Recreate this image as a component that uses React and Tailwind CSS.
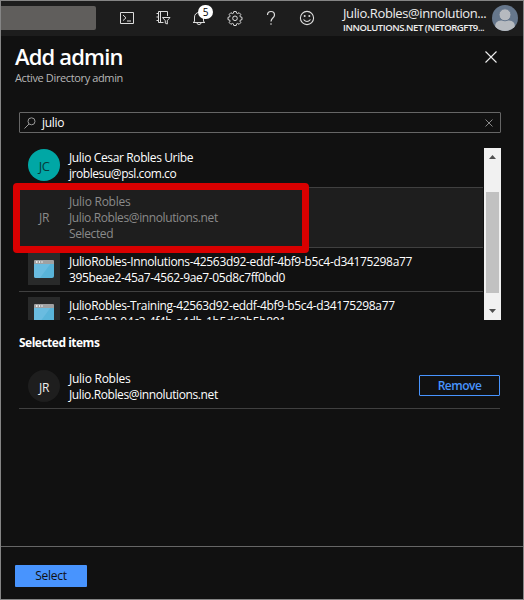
import React from "react";

const line = "whitespace-nowrap leading-4";

function Person({ className = "" }) {
  return (
    <svg viewBox="0 0 26 26" className={className}>
      <defs>
        <clipPath id="avatar"><circle cx="13" cy="13" r="13" /></clipPath>
      </defs>
      <g clipPath="url(#avatar)">
        <rect width="26" height="26" fill="#66778c" />
        <path d="M3 26v-4q0-6.500 6-6.500h8q6 0 6 6.500v4z" fill="#b6babf" />
        <circle cx="13" cy="9.800" r="6" fill="#b6babf" stroke="#66778c" />
      </g>
    </svg>
  );
}

function AppIcon() {
  return (
    <div className="h-8 w-8 shrink-0 bg-[#292a2a]">
      <svg viewBox="0 0 32 32" className="block h-8 w-8">
        <path d="M6 10h20v13q0 2-2 2H8q-2 0-2-2z" fill="#59b4d9" />
        <path d="M6 10h17L12 25H8q-2 0-2-2z" fill="#6abce0" />
        <path d="M6 11V8q0-1 1-1h18q1 0 1 1v3z" fill="#a0a1a2" />
        <path d="M8 9h1.500M11 9h1M13.500 9h1" stroke="#fff" strokeWidth="1.300" />
      </svg>
    </div>
  );
}

function Topbar() {
  return (
    <header className="flex h-[35px] shrink-0 items-start bg-[#1d1d1d] text-[#eee]">
      <div className="mt-[5px] h-6 w-[95px] rounded-r-[2px] bg-[#605e5c]" />
      <svg viewBox="0 0 16 16" className="mt-[9px] ml-[23px] h-4 w-4" fill="none" stroke="#ddd">
        <path d="M1.500 2.500h13v11h-13zM4 5l3 2.800-3 2.800M8 11h4" />
      </svg>
      <svg viewBox="0 0 16 16" className="mt-[9px] ml-5 h-4 w-4" fill="none" stroke="#ddd">
        <path d="M12.500 6V1.500h-9v11h5M5.500 1.500v11M1.500 3.500h2M1.500 7h2M1.500 10.500h2" />
        <path d="M7.500 7.500h7.500l-2.700 3.200v3.300l-2-.8v-2.500z" />
      </svg>
      <div className="relative mt-[9px] ml-5 h-4 w-4">
        <svg viewBox="0 0 16 16" className="h-4 w-4" fill="none" stroke="#ddd">
          <path d="M3.500 11.500V7a4.500 4.500 0 0 1 9 0v4.500l1.500 1H2zM6 13q0 1.500 2 1.500T10 13" />
        </svg>
        <span className="absolute -top-[5px] left-[7px] flex h-[14px] w-[15px] items-center justify-center rounded-full bg-white text-[10px] leading-none text-black">5</span>
      </div>
      <svg viewBox="0 0 16 16" className="mt-[9px] ml-5 h-4 w-4" fill="none" stroke="#ddd" strokeLinejoin="round">
        <path d="M6.800 1.500h2.400l.4 1.700 1 .4 1.500-.9 1.700 1.700-.9 1.500.4 1 1.700.4v2.400l-1.700.4-.4 1 .9 1.500-1.700 1.700-1.500-.9-1 .4-.4 1.700H6.800l-.4-1.700-1-.4-1.500.9-1.700-1.700.9-1.500-.4-1L1 9.700V7.300l1.700-.4.4-1-.9-1.500 1.700-1.700 1.500.9 1-.4z" />
        <circle cx="8" cy="8.300" r="2.300" />
      </svg>
      <svg viewBox="0 0 16 16" className="mt-[9px] ml-5 h-4 w-4" fill="none" stroke="#ddd" strokeWidth="1.200">
        <path d="M4.500 5Q4.500 1.500 8 1.500T11.500 5q0 1.500-1.700 3T8 11.500M8 13.200v1.500" />
      </svg>
      <svg viewBox="0 0 16 16" className="mt-[9px] ml-5 h-4 w-4" fill="none" stroke="#ddd" strokeWidth="1.100">
        <circle cx="8" cy="8" r="6.600" />
        <path d="M4.500 9.500q3.500 4 7 0" />
        <circle cx="5.700" cy="6" r="1" fill="#ddd" stroke="none" />
        <circle cx="10.300" cy="6" r="1" fill="#ddd" stroke="none" />
      </svg>
      <div className="ml-[28px] w-[146px] whitespace-nowrap">
        <div className="mt-[4px] text-[13px] leading-4 tracking-[-0.4px]">Julio.Robles@innolution...</div>
        <div className="mt-px text-[9.5px] leading-3 font-semibold tracking-[-0.45px]">INNOLUTIONS.NET (NETORGFT9...</div>
      </div>
      <Person className="mt-1 ml-[3px] h-[26px] w-[26px] shrink-0" />
    </header>
  );
}

function Row({ icon, children, className = "" }) {
  return (
    <div className={"flex shrink-0 border-b border-[#404040] pl-[9px] " + className}>
      {icon}
      <div className="ml-[9px] pt-px">{children}</div>
    </div>
  );
}

export default function App() {
  return (
    <div className="relative flex h-[600px] w-[524px] flex-col overflow-hidden border border-[#858585] bg-[#111] font-['Open_Sans',sans-serif] text-[12px] text-white">
      <Topbar />
      <div className="flex h-[75px] shrink-0 justify-between pl-[14px]">
        <div>
          <h1 className="mt-[5px] text-[22px] leading-[30px] font-semibold tracking-[-0.85px] whitespace-nowrap">Add admin</h1>
          <p className="text-[11px] leading-[14px] tracking-[-0.37px] whitespace-nowrap text-[#b8b8b8]">Active Directory admin</p>
        </div>
        <svg viewBox="0 0 12 12" className="mt-[15px] mr-[26px] h-3 w-3" stroke="#eee" strokeWidth="1.100">
          <path d="M.5.5l11 11M11.500.5L.5 11.500" />
        </svg>
      </div>

      <div className="mt-px ml-[18px] flex h-[21px] w-[482px] shrink-0 items-center rounded-[1px] border border-[#666]">
        <svg viewBox="0 0 12 12" className="ml-1 h-3 w-3" fill="none" stroke="#999">
          <circle cx="7.500" cy="4.300" r="3.500" />
          <path d="M5 7L.5 11.500" />
        </svg>
        <span className="ml-[6px] tracking-[-0.3px]">julio</span>
        <svg viewBox="0 0 8 8" className="mr-[7px] ml-auto h-2 w-2" stroke="#888">
          <path d="M.5.5l7 7M7.500.5l-7 7" />
        </svg>
      </div>

      <div className="mt-[15px] ml-[18px] flex h-[172px] w-[482px] shrink-0 overflow-hidden">
        <div className="-mt-1 flex h-[180px] w-[464px] shrink-0 flex-col">
          <Row
            className="h-11 pt-[5px]"
            icon={<div className="flex h-8 w-8 items-center justify-center rounded-full bg-[#00a7a5] pt-1 text-[13px] tracking-[-0.5px] text-[#063b3a]">JC</div>}
          >
            <p className={line + " tracking-[-0.37px]"}>Julio Cesar Robles Uribe</p>
            <p className={line + " tracking-[-0.44px]"}>jroblesu@psl.com.co</p>
          </Row>
          <Row
            className="h-[60px] bg-[#1e1e1e] pt-[5px] text-[#8a8a8a]"
            icon={<div className="mt-[9px] flex h-8 w-8 items-center justify-center text-[12px] font-medium tracking-[-0.2px]">JR</div>}
          >
            <p className={line + " tracking-[-0.25px]"}>Julio Robles</p>
            <p className={line + " tracking-[-0.39px]"}>Julio.Robles@innolutions.net</p>
            <p className={line + " tracking-[-0.38px]"}>Selected</p>
          </Row>
          <Row className="h-11 pt-[5px]" icon={<AppIcon />}>
            <p className={line + " tracking-[-0.335px]"}>JulioRobles-Innolutions-42563d92-eddf-4bf9-b5c4-d34175298a77</p>
            <p className={line + " tracking-[-0.37px]"}>395beae2-45a7-4562-9ae7-05d8c7ff0bd0</p>
          </Row>
          <Row className="h-11 pt-[5px]" icon={<AppIcon />}>
            <p className={line + " tracking-[-0.345px]"}>JulioRobles-Training-42563d92-eddf-4bf9-b5c4-d34175298a77</p>
            <p className={line + " tracking-[-0.37px]"}>8a2cf122-04c3-4f4b-a4db-1b5d62b5b891</p>
          </Row>
        </div>
        <div className="ml-px flex w-[17px] flex-col items-center bg-[#f1f1f1]">
          <svg viewBox="0 0 7 4" className="mt-[7px] h-1 w-[7px]"><path d="M0 4L3.500 0 7 4z" fill="#505050" /></svg>
          <div className="mt-[33px] h-[101px] w-[13px] bg-[#c1c1c1]" />
          <svg viewBox="0 0 7 4" className="mt-[16px] h-1 w-[7px]"><path d="M0 0h7L3.500 4z" fill="#505050" /></svg>
        </div>
      </div>

      <h2 className="mt-[15px] ml-[18px] text-[12px] leading-4 font-bold tracking-[-0.5px]">Selected items</h2>
      <div className="mt-[13px] ml-[18px] flex h-[45px] w-[481px] shrink-0 border-b border-[#404040] pt-[6px] pl-[9px]">
        <div className="flex h-8 w-8 items-center justify-center rounded-full bg-[#1e1e1e] pt-[3px] text-[12px] font-medium tracking-[-0.2px] text-[#eee]">JR</div>
        <div className="ml-[9px] pt-px">
          <p className={line + " tracking-[-0.25px]"}>Julio Robles</p>
          <p className={line + " tracking-[-0.39px]"}>Julio.Robles@innolutions.net</p>
        </div>
        <button className="mt-[5px] ml-auto h-[21px] w-[81px] rounded-[1px] border border-[#4894fe] text-[12px] leading-none font-semibold tracking-[-0.5px] text-[#4894fe]">Remove</button>
      </div>

      <footer className="mt-auto h-[53px] shrink-0 border-t border-[#666] pt-[18px] pl-[14px]">
        <button className="block h-[22px] w-[72px] rounded-[1px] bg-[#4894fe] text-[12px] leading-none tracking-[-0.3px] text-[#111]">Select</button>
      </footer>
      <div className="pointer-events-none absolute top-[182px] left-[12px] h-[70px] w-[296px] rounded-[4px] border-7 border-[#d90000]" />
    </div>
  );
}
